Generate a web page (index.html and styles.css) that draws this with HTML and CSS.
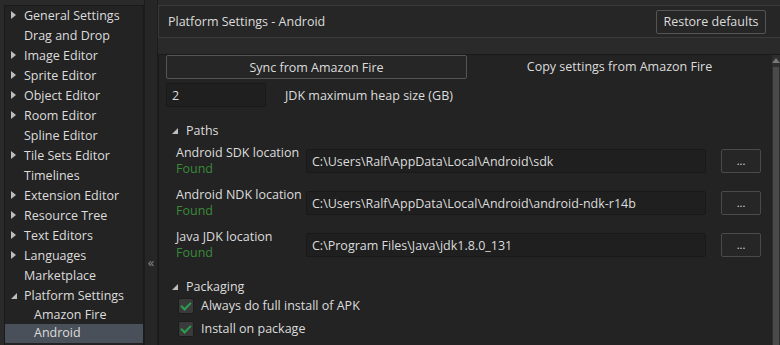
FILE: index.html
```html
<!DOCTYPE html>
<html lang="en">
<head>
    <meta charset="UTF-8">
    <title>Preferences - Android</title>
    <link rel="stylesheet" href="styles.css">
</head>
<body>
    <div class="window">
        <div class="sidebar">
            <ul class="tree">
                <li class="closed">General Settings</li>
                <li>Drag and Drop</li>
                <li class="closed">Image Editor</li>
                <li class="closed">Sprite Editor</li>
                <li class="closed">Object Editor</li>
                <li class="closed">Room Editor</li>
                <li>Spline Editor</li>
                <li class="closed">Tile Sets Editor</li>
                <li>Timelines</li>
                <li class="closed">Extension Editor</li>
                <li class="closed">Resource Tree</li>
                <li class="closed">Text Editors</li>
                <li class="closed">Languages</li>
                <li>Marketplace</li>
                <li class="open">Platform Settings</li>
                <li class="child">Amazon Fire</li>
                <li class="child selected">Android</li>
            </ul>
        </div>
        <div class="collapse"><span>&laquo;</span></div>
        <div class="main">
            <div class="header">
                <span class="title">Platform Settings - Android</span>
                <button class="btn restore">Restore defaults</button>
            </div>
            <div class="content">
                <div class="panel">
                    <div class="sync-row">
                        <button class="btn sync">Sync from Amazon Fire</button>
                        <div class="copy">Copy settings from Amazon Fire</div>
                    </div>
                    <div class="heap-row">
                        <input class="field small" type="text" value="2">
                        <label>JDK maximum heap size (GB)</label>
                    </div>

                    <div class="section open">Paths</div>
                    <div class="path-row">
                        <div class="path-label">Android SDK location<span class="found">Found</span></div>
                        <input class="field path" type="text" value="C:\Users\Ralf\AppData\Local\Android\sdk">
                        <button class="btn dots">...</button>
                    </div>
                    <div class="path-row">
                        <div class="path-label">Android NDK location<span class="found">Found</span></div>
                        <input class="field path" type="text" value="C:\Users\Ralf\AppData\Local\Android\android-ndk-r14b">
                        <button class="btn dots">...</button>
                    </div>
                    <div class="path-row">
                        <div class="path-label">Java JDK location<span class="found">Found</span></div>
                        <input class="field path" type="text" value="C:\Program Files\Java\jdk1.8.0_131">
                        <button class="btn dots">...</button>
                    </div>

                    <div class="section open pack">Packaging</div>
                    <label class="check"><span class="box"></span>Always do full install of APK</label>
                    <label class="check"><span class="box"></span>Install on package</label>
                </div>
                <div class="scrollbar">
                    <div class="arrow"></div>
                    <div class="thumb"></div>
                </div>
            </div>
        </div>
    </div>
</body>
</html>
```

FILE: styles.css
```css
body {
    margin: 0;
    background: #2a2a2a;
    font-family: 'Open Sans', 'DejaVu Sans', sans-serif;
    font-size: 12.5px;
    color: #dcdcdc;
    overflow: hidden;
}
.window {
    display: flex;
    height: 345px;
}
.sidebar {
    width: 138px;
    margin: 5px 0 0 4px;
    background: #232323;
    border: 1px solid #1a1a1a;
    border-bottom: none;
}
.tree {
    list-style: none;
    margin: 0;
    padding: 0;
}
.tree li {
    position: relative;
    height: 20px;
    line-height: 19px;
    padding-left: 19px;
    white-space: nowrap;
}
.tree li.closed::before {
    content: "";
    position: absolute;
    left: 6px;
    top: 5px;
    border-left: 5px solid #bdbdbd;
    border-top: 4.5px solid transparent;
    border-bottom: 4.5px solid transparent;
}
.tree li.open::before,
.section.open::before {
    content: "";
    position: absolute;
    left: 6px;
    top: 7px;
    border-right: 6px solid #bdbdbd;
    border-top: 6px solid transparent;
}
.tree li.child {
    height: 18px;
    line-height: 17px;
    padding-left: 29px;
}
.tree li.selected {
    background: #4a5059;
    height: 19px;
}
.collapse {
    width: 14px;
    background: #262626;
    border-left: 1px solid #1c1c1c;
    border-right: 1px solid #1c1c1c;
    color: #8a8a8a;
    font-size: 13px;
    display: flex;
    justify-content: center;
    align-items: flex-start;
    padding-top: 253px;
    box-sizing: border-box;
}
.main {
    flex: 1;
    display: flex;
    flex-direction: column;
    min-width: 0;
}
.header {
    margin-top: 5px;
    height: 31px;
    border: 1px solid #3a3a3a;
    border-right: none;
    background: #262626;
    display: flex;
    align-items: center;
    justify-content: space-between;
    padding: 0 14px 0 9px;
}
.btn {
    font-family: inherit;
    font-size: 12.5px;
    color: #dcdcdc;
    background: #262626;
    border: 1px solid #555;
    border-radius: 2px;
    padding: 0;
    height: 24px;
}
.restore {
    width: 110px;
}
.content {
    flex: 1;
    margin-top: 16px;
    display: flex;
    background: #232323;
    border-top: 1px solid #1a1a1a;
    border-left: 1px solid #1a1a1a;
}
.panel {
    flex: 1;
    padding: 0 0 0 7px;
}
.sync-row {
    display: flex;
    height: 24px;
}
.sync {
    width: 301px;
}
.copy {
    flex: 1;
    text-align: center;
    line-height: 24px;
}
.heap-row {
    display: flex;
    align-items: center;
    margin-top: 4px;
    gap: 19px;
}
.field {
    font-family: inherit;
    font-size: 12.5px;
    color: #dcdcdc;
    background: #1f1f1f;
    border: 1px solid #191919;
    border-radius: 2px;
    height: 24px;
    box-sizing: border-box;
    padding: 0 5px;
    outline: none;
}
.small {
    width: 100px;
}
.section {
    position: relative;
    margin-top: 14px;
    padding-left: 20px;
    height: 20px;
    line-height: 20px;
}
.pack {
    margin-top: 20px;
}
.path-row {
    display: flex;
    align-items: center;
    height: 24px;
    margin-top: 18px;
    padding-left: 10px;
}
.section + .path-row {
    margin-top: 8px;
}
.path-label {
    width: 130px;
    line-height: 16px;
    display: flex;
    flex-direction: column;
    margin-top: -1px;
}
.found {
    color: #3a8a3a;
}
.path {
    width: 400px;
}
.dots {
    width: 40px;
    margin-left: 15px;
    font-size: 11px;
    line-height: 18px;
    border-color: #4a4a4a;
}
.check {
    display: flex;
    align-items: center;
    height: 23px;
    padding-left: 12px;
    gap: 7px;
}
.section + .check {
    margin-top: -3px;
}
.box {
    width: 14px;
    height: 14px;
    background: #3a3a3a;
    border: 1px solid #1c1c1c;
    border-radius: 2px;
    position: relative;
}
.box::after {
    content: "";
    position: absolute;
    left: 4px;
    top: 1px;
    width: 4px;
    height: 8px;
    border-right: 2px solid #28a050;
    border-bottom: 2px solid #28a050;
    transform: rotate(45deg);
}
.scrollbar {
    width: 8px;
    background: #2e2e2e;
    display: flex;
    flex-direction: column;
    align-items: center;
}
.arrow {
    margin-top: 3px;
    border-bottom: 5px solid #777;
    border-left: 4px solid transparent;
    border-right: 4px solid transparent;
}
.thumb {
    margin-top: 4px;
    width: 6px;
    flex: 1;
    background: #4a4a4a;
}
```
